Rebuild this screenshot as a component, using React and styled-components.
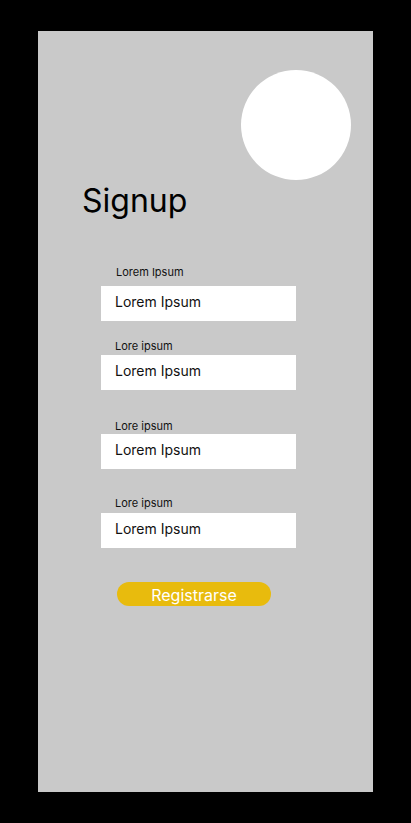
import React from 'react';
import styled, { createGlobalStyle } from 'styled-components';

const GlobalStyle = createGlobalStyle`
  html, body, #root {
    margin: 0;
    height: 100%;
    background: #000;
  }
  body {
    font-family: Inter, "Noto Sans", sans-serif;
  }
`;

const fields = [
  { label: 'Lorem Ipsum', gap: 0, labelGap: 7, indent: 15 },
  { label: 'Lore ipsum', gap: 19, labelGap: 2, indent: 14 },
  { label: 'Lore ipsum', gap: 30, labelGap: 1, indent: 14 },
  { label: 'Lore ipsum', gap: 28, labelGap: 3, indent: 14 },
];

function App() {
  return (
    <>
      <GlobalStyle />
      <Page>
        <Panel>
          <Avatar />
          <Title>Signup</Title>
          <Form>
            {fields.map((field, i) => (
              <Field key={i} gap={field.gap}>
                <Label indent={field.indent} labelGap={field.labelGap}>
                  {field.label}
                </Label>
                <Input readOnly value="Lorem Ipsum" />
              </Field>
            ))}
            <Button type="button">Registrarse</Button>
          </Form>
        </Panel>
      </Page>
    </>
  );
}

const Page = styled.div`
  min-height: 100%;
  padding: 31px 0 0 38px;
  box-sizing: border-box;
  background: #000;
`;

const Panel = styled.main`
  width: 335px;
  height: 761px;
  padding-top: 39px;
  box-sizing: border-box;
  background: #c9c9c9;
  display: flex;
  flex-direction: column;
`;

const Avatar = styled.div`
  align-self: flex-end;
  width: 110px;
  height: 110px;
  margin-right: 22px;
  border-radius: 50%;
  background: #fff;
`;

const Title = styled.h1`
  margin: 5px 0 0 44px;
  font-size: 32px;
  line-height: 32px;
  font-weight: 400;
  color: #000;
`;

const Form = styled.form`
  display: flex;
  flex-direction: column;
  align-items: flex-start;
  margin: 49px 0 0 63px;
`;

const Field = styled.div`
  display: flex;
  flex-direction: column;
  margin-top: ${props => props.gap}px;
`;

const Label = styled.label`
  display: block;
  padding-left: ${props => props.indent}px;
  margin-bottom: ${props => props.labelGap}px;
  font-size: 11px;
  line-height: 13px;
  color: #111;
`;

const Input = styled.input`
  width: 195px;
  height: 35px;
  padding: 0 14px 5px;
  box-sizing: border-box;
  border: none;
  outline: none;
  background: #fff;
  font-family: Inter, "Noto Sans", sans-serif;
  font-size: 14px;
  line-height: 17px;
  color: #111;
`;

const Button = styled.button`
  display: flex;
  align-items: center;
  justify-content: center;
  width: 154px;
  height: 24px;
  margin: 34px 0 0 16px;
  padding: 2px 0 0;
  border: none;
  border-radius: 12px;
  background: #e8bb0d;
  color: #fff;
  font-family: Inter, "Noto Sans", sans-serif;
  font-size: 16px;
  cursor: pointer;
`;

export default App;
